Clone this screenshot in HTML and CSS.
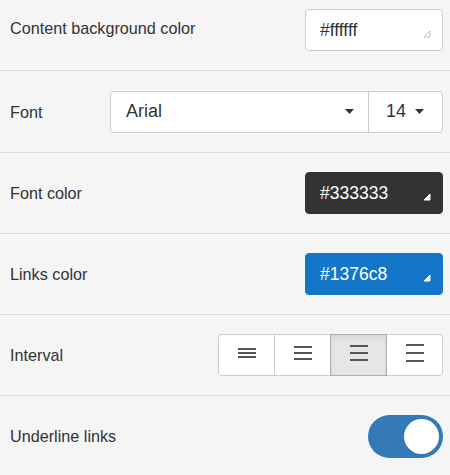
FILE: index.html
```html
<!DOCTYPE html>
<html>
<head>
<meta charset="utf-8">
<link rel="stylesheet" href="styles.css">
</head>
<body>
<div class="panel">
  <div class="row row-1">
    <span class="label">Content background color</span>
    <div class="color-input color-light">
      <span class="color-value">#ffffff</span>
      <svg class="corner" width="8" height="8" viewBox="0 0 8 8"><path d="M1 7 L7 1 L7 7 Z" fill="#fff" stroke="#bdbdbd" stroke-width="1" stroke-linejoin="round"/></svg>
    </div>
  </div>
  <div class="row row-2">
    <span class="label">Font</span>
    <div class="select-group">
      <div class="sel sel-family"><span>Arial</span><svg class="caret" width="9" height="5" viewBox="0 0 9 5"><path d="M0 0 H9 L4.5 5 Z" fill="#333"/></svg></div>
      <div class="sel sel-size"><span>14</span><svg class="caret" width="9" height="5" viewBox="0 0 9 5"><path d="M0 0 H9 L4.5 5 Z" fill="#333"/></svg></div>
    </div>
  </div>
  <div class="row row-n">
    <span class="label">Font color</span>
    <div class="color-input color-dark">
      <span class="color-value">#333333</span>
      <svg class="corner" width="8" height="8" viewBox="0 0 8 8"><path d="M1 7 L7 1 L7 7 Z" fill="#fff" stroke="#fff" stroke-width="1" stroke-linejoin="round"/></svg>
    </div>
  </div>
  <div class="row row-n">
    <span class="label">Links color</span>
    <div class="color-input color-blue">
      <span class="color-value">#1376c8</span>
      <svg class="corner" width="8" height="8" viewBox="0 0 8 8"><path d="M1 7 L7 1 L7 7 Z" fill="#fff" stroke="#fff" stroke-width="1" stroke-linejoin="round"/></svg>
    </div>
  </div>
  <div class="row row-n">
    <span class="label">Interval</span>
    <div class="btn-group">
      <div class="btn btn-first"><svg class="ico" width="18" height="10" viewBox="0 0 18 10"><rect x="0" y="0" width="18" height="2"/><rect x="0" y="4" width="18" height="2"/><rect x="0" y="8" width="18" height="2"/></svg></div>
      <div class="btn"><svg class="ico" width="18" height="14" viewBox="0 0 18 14"><rect x="0" y="0" width="18" height="2"/><rect x="0" y="6" width="18" height="2"/><rect x="0" y="12" width="18" height="2"/></svg></div>
      <div class="btn btn-active"><svg class="ico" width="18" height="16" viewBox="0 0 18 16"><rect x="0" y="0" width="18" height="2"/><rect x="0" y="7" width="18" height="2"/><rect x="0" y="14" width="18" height="2"/></svg></div>
      <div class="btn btn-last"><svg class="ico" width="18" height="18" viewBox="0 0 18 18"><rect x="0" y="0" width="18" height="2"/><rect x="0" y="8" width="18" height="2"/><rect x="0" y="16" width="18" height="2"/></svg></div>
    </div>
  </div>
  <div class="row row-last">
    <span class="label">Underline links</span>
    <div class="toggle"><div class="knob"></div></div>
  </div>
</div>
</body>
</html>
```
FILE: styles.css
```css
html, body {
  margin: 0;
  padding: 0;
  background: #f5f5f5;
}
body {
  font-family: "Liberation Sans", Arial, sans-serif;
  color: #333;
  width: 450px;
  height: 475px;
  overflow: hidden;
}
.panel {
  display: flex;
  flex-direction: column;
}
.row {
  display: flex;
  align-items: center;
  padding: 0 7px 0 10px;
  border-bottom: 1px solid #dddddd;
  box-sizing: content-box;
}
.row-1 {
  height: 70px;
  align-items: flex-start;
}
.row-1 .label {
  margin-top: 18px;
}
.row-1 .color-input {
  margin-top: 9px;
}
.row-2 {
  height: 81px;
}
.row-n {
  height: 80px;
}
.row-last {
  height: 80px;
  border-bottom: none;
}
.label {
  font-size: 16.2px;
  line-height: 20px;
  color: #333;
}
.color-input {
  margin-left: auto;
  width: 138px;
  height: 42px;
  box-sizing: border-box;
  border: 1px solid #cccccc;
  border-radius: 4px;
  display: flex;
  align-items: center;
  padding-left: 14px;
  font-size: 17.5px;
}
.color-value {
  flex: 1;
}
.corner {
  display: block;
  align-self: flex-end;
  margin: 0 11px 12px 0;
}
.color-light {
  background: #fff;
  color: #333;
}
.color-dark {
  background: #333333;
  border-color: #333333;
  color: #fff;
}
.color-blue {
  background: #1376c8;
  border-color: #1376c8;
  color: #fff;
}
.select-group {
  margin-left: auto;
  width: 333px;
  height: 42px;
  box-sizing: border-box;
  border: 1px solid #cccccc;
  border-radius: 4px;
  background: #fff;
  display: flex;
  font-size: 18px;
}
.sel {
  display: flex;
  align-items: center;
  justify-content: space-between;
}
.sel-family {
  flex: 1;
  padding: 0 14px 0 15px;
  border-right: 1px solid #cccccc;
}
.sel-size {
  width: 73px;
  box-sizing: border-box;
  padding: 0 18px 0 17px;
}
.caret {
  display: block;
}
.btn-group {
  margin-left: auto;
  display: flex;
  height: 42px;
}
.btn {
  width: 57px;
  height: 42px;
  box-sizing: border-box;
  border: 1px solid #cccccc;
  background: #fff;
  margin-left: -1px;
  display: flex;
  align-items: center;
  justify-content: center;
}
.btn-first {
  margin-left: 0;
  border-radius: 4px 0 0 4px;
}
.btn-last {
  border-radius: 0 4px 4px 0;
}
.btn-active {
  background: #e6e6e6;
  border-color: #adadad;
  position: relative;
  z-index: 2;
  box-shadow: inset 0 3px 5px rgba(0, 0, 0, 0.08);
}
.ico {
  display: block;
  fill: #555;
  margin-bottom: 4px;
}
.toggle {
  margin-left: auto;
  width: 75px;
  height: 43px;
  box-sizing: border-box;
  border-radius: 22px;
  background: #337ab7;
  display: flex;
  align-items: center;
  justify-content: flex-end;
  padding: 0 4px;
}
.knob {
  width: 35px;
  height: 35px;
  border-radius: 50%;
  background: #fff;
}
```
